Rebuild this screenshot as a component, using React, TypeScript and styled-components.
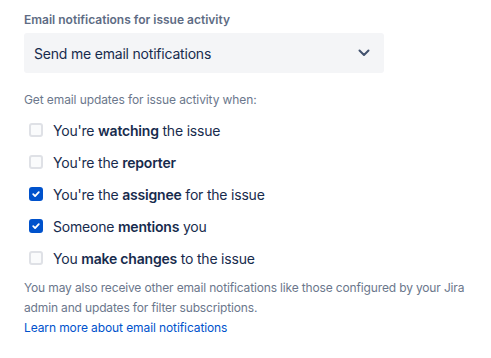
import styled, { createGlobalStyle } from "styled-components";

const Global = createGlobalStyle`
  body {
    margin: 0;
    background: #ffffff;
    font-family: Inter, "Noto Sans", sans-serif;
    color: #172b4d;
  }
`;

type Option = {
  before: string;
  bold: string;
  after: string;
  checked: boolean;
};

const options: Option[] = [
  { before: "You're ", bold: "watching", after: " the issue", checked: false },
  { before: "You're the ", bold: "reporter", after: "", checked: false },
  { before: "You're the ", bold: "assignee", after: " for the issue", checked: true },
  { before: "Someone ", bold: "mentions", after: " you", checked: true },
  { before: "You ", bold: "make changes", after: " to the issue", checked: false },
];

export default function App() {
  return (
    <Page>
      <Global />
      <FieldLabel>Email notifications for issue activity</FieldLabel>
      <Select>
        <span>Send me email notifications</span>
        <svg width="12" height="8" viewBox="0 0 12 8">
          <path
            d="M1.5 1.5L6 6l4.5-4.5"
            stroke="#42526e"
            strokeWidth="2"
            fill="none"
            strokeLinecap="round"
            strokeLinejoin="round"
          />
        </svg>
      </Select>

      <Hint>Get email updates for issue activity when:</Hint>
      <List>
        {options.map((o) => (
          <Row key={o.bold}>
            <Box $checked={o.checked}>
              {o.checked && (
                <svg width="10" height="10" viewBox="0 0 10 10">
                  <path
                    d="M2.2 5.2l1.9 1.9 3.7-4"
                    stroke="#ffffff"
                    strokeWidth="1.8"
                    fill="none"
                    strokeLinecap="round"
                    strokeLinejoin="round"
                  />
                </svg>
              )}
            </Box>
            <span>
              {o.before}
              <b>{o.bold}</b>
              {o.after}
            </span>
          </Row>
        ))}
      </List>

      <Footer>
        You may also receive other email notifications like those configured by your Jira
        admin and updates for filter subscriptions.
      </Footer>
      <Link href="#">Learn more about email notifications</Link>
    </Page>
  );
}

const Page = styled.main`
  padding: 12px 24px;
  display: flex;
  flex-direction: column;
  align-items: flex-start;
`;

const FieldLabel = styled.div`
  font-size: 12px;
  font-weight: 600;
  line-height: 16px;
  color: #5e6c84;
  margin-bottom: 5px;
`;

const Select = styled.div`
  width: 360px;
  height: 40px;
  box-sizing: border-box;
  background: #f4f5f7;
  border-radius: 3px;
  display: flex;
  align-items: center;
  justify-content: space-between;
  padding: 0 14px 0 10px;
  font-size: 14px;
  letter-spacing: -0.2px;
  color: #172b4d;
`;

const Hint = styled.div`
  margin-top: 19px;
  font-size: 12px;
  line-height: 16px;
  letter-spacing: -0.1px;
  color: #6b778c;
`;

const List = styled.div`
  display: flex;
  flex-direction: column;
  margin-top: 6px;
`;

const Row = styled.label`
  display: flex;
  align-items: center;
  height: 32px;
  padding-left: 5px;
  gap: 10px;
  font-size: 14px;
  letter-spacing: -0.2px;
  color: #172b4d;

  b {
    font-weight: 600;
  }
`;

const Box = styled.span<{ $checked: boolean }>`
  width: 14px;
  height: 14px;
  box-sizing: border-box;
  border-radius: 3px;
  display: flex;
  align-items: center;
  justify-content: center;
  background: ${(p) => (p.$checked ? "#0052cc" : "#fafbfc")};
  border: 2px solid ${(p) => (p.$checked ? "#0052cc" : "#dfe1e6")};
`;

const Footer = styled.p`
  margin: 4px 0 0;
  font-size: 12px;
  line-height: 20px;
  letter-spacing: -0.15px;
  color: #6b778c;
  max-width: 455px;
`;

const Link = styled.a`
  font-size: 12px;
  line-height: 20px;
  letter-spacing: -0.1px;
  color: #0052cc;
  text-decoration: none;
`;
